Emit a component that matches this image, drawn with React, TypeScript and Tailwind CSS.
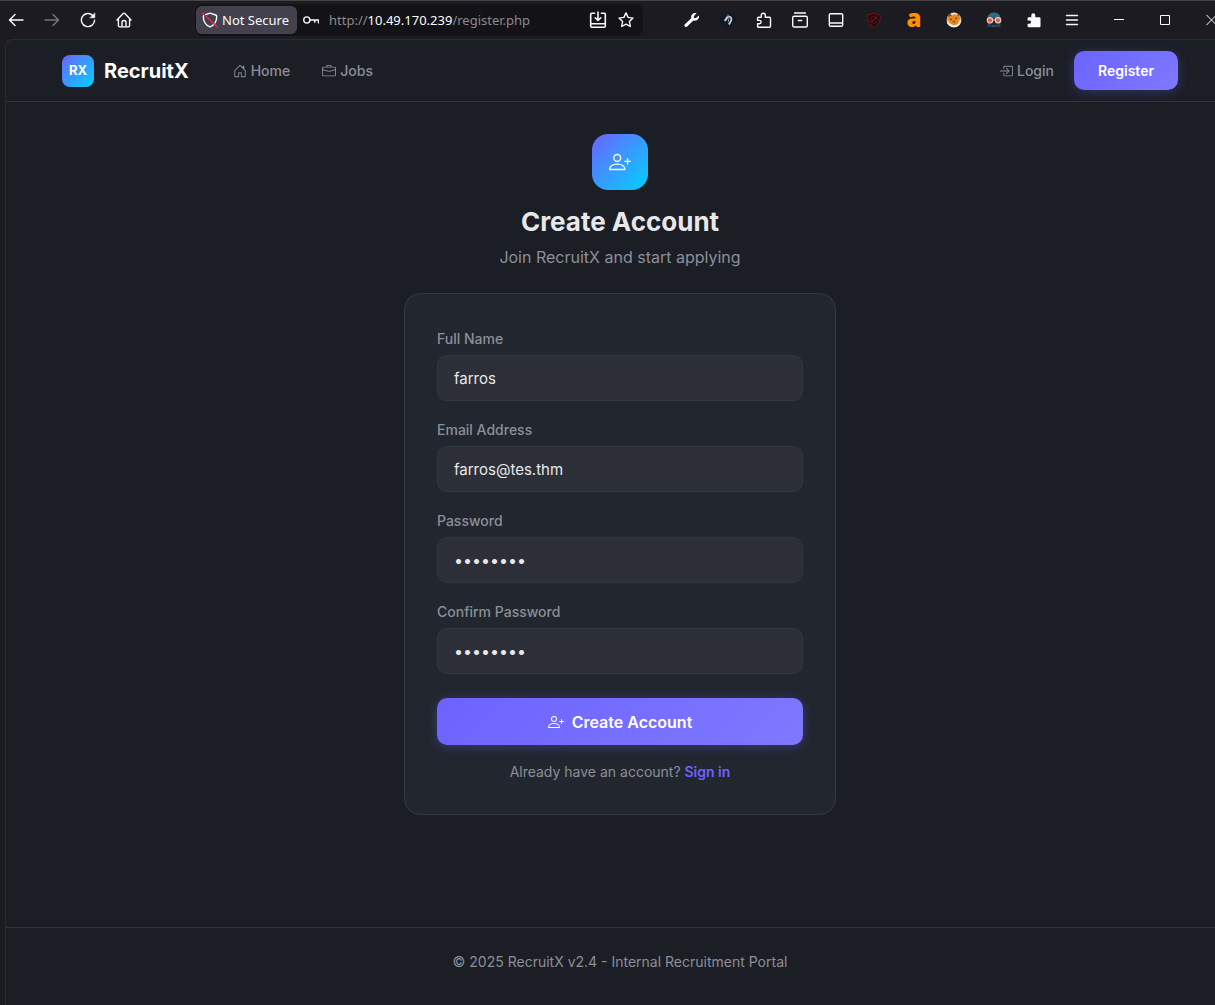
import type { ReactNode } from 'react';
import { BsBoxArrowInRight, BsBriefcase, BsHouseDoor, BsPersonPlus } from 'react-icons/bs';

interface ToolButtonProps {
  label: string;
  className?: string;
  children: ReactNode;
}

function ToolButton({ label, className = 'w-8', children }: ToolButtonProps) {
  return (
    <button type="button" aria-label={label} className={`flex h-8 shrink-0 items-center justify-center ${className}`}>
      {children}
    </button>
  );
}

interface LineIconProps {
  className?: string;
  children: ReactNode;
}

function LineIcon({ className = 'size-4', children }: LineIconProps) {
  return (
    <svg
      viewBox="0 0 16 16"
      className={className}
      fill="none"
      stroke="currentColor"
      strokeWidth="1.4"
      strokeLinecap="round"
      strokeLinejoin="round"
      aria-hidden="true"
    >
      {children}
    </svg>
  );
}

const PUZZLE =
  'M2.6 5.2h2.7V3.200a2 2 0 0 1 4 0v2h4.200a1 1 0 0 1 1 1v8.100a1 1 0 0 1-1 1H2.600a1 1 0 0 1-1-1v-2.500h1.800a1.700 1.700 0 0 0 0-3.400H1.600V6.200a1 1 0 0 1 1-1z';

function BrowserBar() {
  return (
    <header className="flex h-[39px] items-center border-t border-[#454545] bg-[#1c1b22] text-[#fbfbfe]">
      <div className="flex gap-1">
        <ToolButton label="Back">
          <LineIcon>
            <path d="M15 8H2M7 2.5 1.5 8 7 13.5" />
          </LineIcon>
        </ToolButton>
        <ToolButton label="Forward">
          <LineIcon className="size-4 text-[#77767b]">
            <path d="M1 8h13M9 2.5 14.5 8 9 13.5" />
          </LineIcon>
        </ToolButton>
        <ToolButton label="Reload">
          <LineIcon>
            <path d="M14.6 8.3A6.6 6.6 0 1 1 12.7 3.4" />
            <path d="M14.8 1.2v4.6h-4.6z" fill="currentColor" strokeWidth="0.6" />
          </LineIcon>
        </ToolButton>
        <ToolButton label="Home page">
          <LineIcon>
            <path d="M1 8 7.2 1.6a1.1 1.1 0 0 1 1.6 0L15 8M2.4 7v6.6a1.3 1.3 0 0 0 1.3 1.3h8.6a1.3 1.3 0 0 0 1.3-1.3V7" />
            <path d="M6 14.5v-4a2 2 0 0 1 4 0v4" />
          </LineIcon>
        </ToolButton>
      </div>

      <div className="ml-[55px] flex h-8 min-w-0 flex-1 items-center rounded-lg bg-[#131217] px-px font-['Noto_Sans',sans-serif] text-[13px]">
        <button
          type="button"
          className="flex h-7 w-[101px] shrink-0 items-center gap-1 rounded-md bg-[#42414d] pl-1.5 whitespace-nowrap"
        >
          <svg viewBox="0 0 16 16" className="size-4 shrink-0" fill="none" aria-hidden="true">
            <path
              d="M8 1.2 13.6 3c.8.3 1.1.7 1.1 1.5C14.7 9.4 12 13.3 8 14.9 4 13.3 1.3 9.4 1.3 4.5c0-.8.3-1.2 1.1-1.5z"
              stroke="#fbfbfe"
              strokeWidth="1.4"
            />
            <path d="M.6 1.2 15.4 15" stroke="#e22850" strokeWidth="1.6" strokeLinecap="round" />
          </svg>
          <span className="pt-0.5">Not Secure</span>
        </button>
        <ToolButton label="Saved logins" className="w-7">
          <LineIcon>
            <circle cx="3.8" cy="8" r="3.1" />
            <path d="M7 8h8.4v2.8M11.8 8v2.2" />
          </LineIcon>
        </ToolButton>
        <div className="min-w-0 flex-1 pt-0.5 pl-1 whitespace-nowrap text-[#8b8a90]">
          http://<span className="text-[#fbfbfe]">10.49.170.239</span>/register.php
        </div>
        <ToolButton label="Install page" className="w-7">
          <LineIcon className="size-[18px]">
            <path d="M5 2H2.5a1 1 0 0 0-1 1v10.4a1 1 0 0 0 1 1h11a1 1 0 0 0 1-1V3a1 1 0 0 0-1-1H11M1.5 11.4h13M8 1v7.4M5.5 6 8 8.5 10.5 6" />
          </LineIcon>
        </ToolButton>
        <ToolButton label="Bookmark this page" className="mr-0.5 w-7">
          <LineIcon>
            <path d="m8 .9 2.1 4.5 4.9.7-3.6 3.4.9 5L8 12.1l-4.3 2.4.9-5L1 6.1l4.9-.7z" />
          </LineIcon>
        </ToolButton>
      </div>

      <div className="ml-[33px] flex gap-1">
        <ToolButton label="Developer tools">
          <svg viewBox="0 0 16 16" className="size-4" aria-hidden="true">
            <path
              d="M12.6 1.2 9.9 4v2.1H12l2.8-2.7c.8 2.4-.7 5-3.4 5.2-.7.1-1.3 0-1.9-.2l-6.4 6a1.5 1.5 0 0 1-2.2-2.1l6.4-6C6.3 3.2 9 .2 12.6 1.2z"
              fill="currentColor"
            />
          </svg>
        </ToolButton>
        <ToolButton label="Knight extension">
          <svg viewBox="0 0 16 16" className="size-4" fill="none" aria-hidden="true">
            <circle cx="8" cy="8" r="8" fill="#101a24" />
            <path d="M4.800 9 7.600 4.800" stroke="#c3ccd5" strokeWidth="2.200" />
            <path d="M7.200 4.800C10.500 3.800 12 6.200 11.200 8.500c-.5 1.600-1.500 2.500-2.400 4" stroke="#c3ccd5" strokeWidth="1.800" />
            <path d="M8 5.200V2.400M8.800 6.500 8.300 10" stroke="#8795a3" />
          </svg>
        </ToolButton>
        <ToolButton label="Extensions">
          <LineIcon>
            <path d={PUZZLE} />
          </LineIcon>
        </ToolButton>
        <ToolButton label="Archive">
          <LineIcon>
            <path d="M2.6 1h10.8" />
            <rect x=".7" y="4.3" width="14.6" height="10.7" rx="1.5" />
            <path d="M6.5 8.5h3" strokeWidth="1.7" />
          </LineIcon>
        </ToolButton>
        <ToolButton label="Sidebar">
          <LineIcon>
            <rect x="1.3" y="1.7" width="13.4" height="9.3" rx="1.3" />
            <path d="M1.3 11.5v1.2a1.6 1.6 0 0 0 1.6 1.6h10.2a1.6 1.6 0 0 0 1.6-1.6v-1.2" />
          </LineIcon>
        </ToolButton>
      </div>

      <div className="ml-1.5 flex gap-2">
        <ToolButton label="Content blocker">
          <svg viewBox="0 0 16 16" className="size-4" fill="none" stroke="#7d0d12" aria-hidden="true">
            <path d="M8 1c2 1.5 4 1.8 6.2 1.9.2 6-1 9.5-6.2 12.3C2.8 12.4 1.6 8.9 1.8 2.9 4 2.8 6 2.5 8 1z" fill="#170c10" />
            <circle cx="8" cy="7.7" r="3.7" strokeWidth=".8" />
            <path d="m5.5 10.2 5-5" stroke="#b0161c" />
          </svg>
        </ToolButton>
        <ToolButton label="Shopping assistant">
          <span className="pb-1 font-['Open_Sans',sans-serif] text-2xl leading-6 font-extrabold text-[#ff9100]">a</span>
        </ToolButton>
        <ToolButton label="Fox extension">
          <svg viewBox="0 0 16 16" className="size-4" aria-hidden="true">
            <circle cx="8" cy="8" r="7.4" fill="#e8e0d4" />
            <path d="M1.5 4.5 5 4l3-1.5 4.5.5L15 6.5 13 9l-1.5 3.5-4 .8L3.500 11 1 7.500z" fill="#e8871c" />
            <path d="m1.500 3 3-1.500L6 3.500 2.500 5zM10.500 1.300l3.300 1-.8 2.500z" fill="#8a4a14" />
            <path d="M4.300 6.700h1.500v1.400H4.300zM9.400 5.700h1.500v1.400H9.400zM6.500 9.600l2.400-.6-.7 1.700z" fill="#38302d" />
            <path d="M1.300 10.500c2 3.700 7.600 5.600 12 1.500" stroke="#f3efe8" strokeWidth="1.3" fill="none" />
          </svg>
        </ToolButton>
        <ToolButton label="User agent">
          <svg viewBox="0 0 16 16" className="size-4" aria-hidden="true">
            <path d="M1.5 6.5C1.5 2.8 4.2.5 8 .5s6.5 2.3 6.5 6z" fill="#2f6b7c" />
            <path d="M1.5 10h3l.8 1.400h5.400l.8-1.400h3v5h-13z" fill="#1d4654" />
            <path d="M5 12.500h6V15H5z" fill="#0f1720" />
            <path d="M5.500 14h5" stroke="#4b8795" />
            <circle cx="4" cy="8.3" r="2.7" fill="#d9604d" stroke="#f6c8bd" strokeWidth="1.2" />
            <circle cx="12" cy="8.3" r="2.7" fill="#d9604d" stroke="#f6c8bd" strokeWidth="1.2" />
            <path d="M6.700 8h2.600" stroke="#f6c8bd" />
          </svg>
        </ToolButton>
        <ToolButton label="Manage extensions">
          <svg viewBox="0 0 16 16" className="size-4" aria-hidden="true">
            <path d={PUZZLE} fill="currentColor" />
          </svg>
        </ToolButton>
      </div>

      <ToolButton label="Menu" className="ml-1.5 w-8">
        <LineIcon>
          <path d="M2.5 3.5h11M2.5 8h11M2.5 12.5h11" />
        </LineIcon>
      </ToolButton>
      <ToolButton label="Minimize" className="ml-2 w-[46px]">
        <svg viewBox="0 0 10 10" className="size-2.5" stroke="currentColor" fill="none" aria-hidden="true">
          <path d="M0 4.5h10" />
        </svg>
      </ToolButton>
      <ToolButton label="Maximize" className="w-[46px]">
        <svg viewBox="0 0 10 10" className="size-2.5" stroke="currentColor" fill="none" aria-hidden="true">
          <path d="M.5.5h9v9h-9z" />
        </svg>
      </ToolButton>
      <ToolButton label="Close" className="w-[27px] overflow-hidden pl-5">
        <svg viewBox="0 0 11 10" className="h-2.5 w-[11px] shrink-0" stroke="currentColor" fill="none" aria-hidden="true">
          <path d="m.5 0 10 10m0-10-10 10" />
        </svg>
      </ToolButton>
    </header>
  );
}

function Navbar() {
  return (
    <nav className="flex h-[62px] items-center border-b border-[#30343c] pr-[37px] pl-14 text-sm font-medium text-[#8b8f98]">
      <a href="#top" className="flex items-center gap-2.5 text-xl font-bold text-white">
        <span className="flex size-8 items-center justify-center rounded-lg bg-[linear-gradient(135deg,#6c63ff,#00d2ff)] text-[13px]">
          RX
        </span>
        RecruitX
      </a>
      <a href="#home" className="ml-11 flex items-center gap-1">
        <BsHouseDoor className="size-3.5" />
        Home
      </a>
      <a href="#jobs" className="ml-8 flex items-center gap-1">
        <BsBriefcase className="size-3.5" />
        Jobs
      </a>
      <a href="#login" className="ml-auto flex items-center gap-1">
        <BsBoxArrowInRight className="size-3.5" />
        Login
      </a>
      <a
        href="#register"
        className="ml-5 rounded-[10px] bg-[linear-gradient(135deg,#6c63ff,#7f78ff)] px-6 py-[9px] leading-[21px] font-semibold text-white shadow-[0_2px_12px_rgba(108,99,255,0.3)]"
      >
        Register
      </a>
    </nav>
  );
}

interface FieldProps {
  id: string;
  label: string;
  type: string;
  value: string;
}

function Field({ id, label, type, value }: FieldProps) {
  const textSize = type === 'password' ? 'text-base' : 'text-[15px]';
  return (
    <div className="mb-[19px]">
      <label htmlFor={id} className="mb-1.5 block text-sm leading-5 font-medium text-[#8b8f98]">
        {label}
      </label>
      <input
        id={id}
        type={type}
        defaultValue={value}
        className={`block h-[46px] w-full rounded-[10px] border border-[#343842] bg-[#2c2f38] px-4 text-[#e8e8ea] outline-none ${textSize}`}
      />
    </div>
  );
}

export default function App() {
  return (
    <div className="flex min-h-screen flex-col bg-[#1c1b22] font-[Inter,sans-serif]">
      <BrowserBar />
      <div className="ml-[5px] flex flex-1 flex-col rounded-tl-lg border-t border-l border-[#2a2a31] bg-[#1b1e25]">
        <Navbar />

        <main className="flex flex-1 flex-col items-center pt-8 pl-[19px]">
          <div className="flex size-14 items-center justify-center rounded-2xl bg-[linear-gradient(135deg,#6c63ff,#00d2ff)] text-white">
            <BsPersonPlus className="size-[22px]" />
          </div>
          <h1 className="mt-3 text-[26px] leading-10 font-bold text-[#e8e8ea]">Create Account</h1>
          <p className="mt-[3px] text-base leading-6 text-[#8b8f98]">Join RecruitX and start applying</p>

          <form
            className="mt-6 w-full max-w-[432px] rounded-2xl border border-[#343842] bg-[#22262e] px-8 pt-[35px] pb-[31px]"
            onSubmit={(e) => e.preventDefault()}
          >
            <Field id="name" label="Full Name" type="text" value="farros" />
            <Field id="email" label="Email Address" type="email" value="farros@tes.thm" />
            <Field id="password" label="Password" type="password" value="password" />
            <Field id="confirm" label="Confirm Password" type="password" value="password" />
            <button
              type="submit"
              className="mt-6 flex h-[47px] w-full items-center justify-center gap-2 rounded-[10px] bg-[linear-gradient(135deg,#6c63ff,#7f78ff)] text-base font-semibold text-white shadow-[0_2px_12px_rgba(108,99,255,0.3)]"
            >
              <BsPersonPlus className="size-4" />
              Create Account
            </button>
            <p className="mt-4 text-center text-sm leading-[22px] text-[#8b8f98]">
              Already have an account?{' '}
              <a href="#login" className="font-semibold text-[#6c63ff]">
                Sign in
              </a>
            </p>
          </form>
        </main>

        <footer className="border-t border-[#30343c] pt-[23px] pb-8 pl-[19px] text-center text-sm leading-[22px] text-[#8b8f98]">
          © 2025 RecruitX v2.4 - Internal Recruitment Portal
        </footer>
      </div>
    </div>
  );
}
